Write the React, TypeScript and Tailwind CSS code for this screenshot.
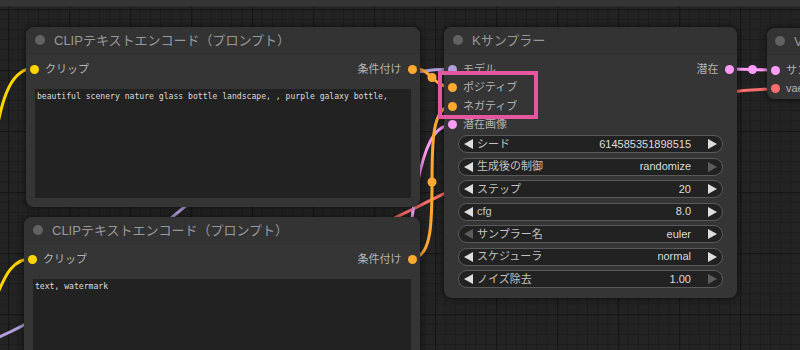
import React from "react";

const SLOT_COLORS = {
  clip: "#ffd500",
  conditioning: "#ffa931",
  model: "#b39ddb",
  latent: "#ff9cf9",
  vae: "#ff6e6e",
};

type WidgetRow = {
  label: string;
  value: string;
  leftOff?: boolean;
  rightOff?: boolean;
};

const KSAMPLER_WIDGETS: WidgetRow[] = [
  { label: "シード", value: "614585351898515" },
  { label: "生成後の制御", value: "randomize", rightOff: true },
  { label: "ステップ", value: "20" },
  { label: "cfg", value: "8.0" },
  { label: "サンプラー名", value: "euler", leftOff: true },
  { label: "スケジューラ", value: "normal" },
  { label: "ノイズ除去", value: "1.00", rightOff: true },
];

const Dot = ({ color }: { color: string }) => (
  <span
    className="w-[9px] h-[9px] rounded-full shrink-0"
    style={{ backgroundColor: color }}
  />
);

const InputSlot = ({ color, label }: { color: string; label: string }) => (
  <div className="flex items-center gap-[6px] pl-[4px] h-[18.5px]">
    <Dot color={color} />
    <span className="text-[11px] text-[#b4b4b4] leading-none whitespace-nowrap">
      {label}
    </span>
  </div>
);

const OutputSlot = ({ color, label }: { color: string; label: string }) => (
  <div className="flex items-center gap-[6px] pr-[3.5px] h-[18.5px]">
    <span className="text-[11px] text-[#b4b4b4] leading-none whitespace-nowrap">
      {label}
    </span>
    <Dot color={color} />
  </div>
);

const NodeTitle = ({ title, pad = "pl-[9px]" }: { title: string; pad?: string }) => (
  <div
    className={`h-[27px] flex items-center gap-[9px] ${pad} bg-[#333] rounded-t-[8px] border-b border-[#2f2f2f]`}
  >
    <span className="w-[10px] h-[10px] rounded-full bg-[#626262] shrink-0" />
    <span className="text-[13px] text-[#999] whitespace-nowrap leading-none">
      {title}
    </span>
  </div>
);

const Arrow = ({ dir, off }: { dir: "left" | "right"; off?: boolean }) => (
  <svg width="9" height="10" viewBox="0 0 9 10" className="shrink-0">
    <polygon
      points={dir === "left" ? "9,0 9,10 0,5" : "0,0 0,10 9,5"}
      fill={off ? "#5c5c5c" : "#dedede"}
    />
  </svg>
);

const Widget = ({ row }: { row: WidgetRow }) => (
  <div className="h-[18px] rounded-full bg-[#222] border border-[#5a5a5a] flex items-center pl-[5px] pr-[5px]">
    <Arrow dir="left" off={row.leftOff} />
    <span className="ml-[4px] text-[11px] text-[#c4c4c4] leading-none whitespace-nowrap">
      {row.label}
    </span>
    <span className="ml-auto text-[11px] text-[#dcdcdc] leading-none whitespace-nowrap">
      {row.value}
    </span>
    <span className="ml-[17px] flex">
      <Arrow dir="right" off={row.rightOff} />
    </span>
  </div>
);

const ClipTextNode = ({
  className,
  prompt,
}: {
  className: string;
  prompt: string;
}) => (
  <div
    className={`absolute rounded-[8px] bg-[#353535] shadow-[0_0_5px_2px_rgba(0,0,0,0.4)] ${className}`}
  >
    <NodeTitle title="CLIPテキストエンコード（プロンプト）" />
    <div className="pt-[6px] flex justify-between">
      <InputSlot color={SLOT_COLORS.clip} label="クリップ" />
      <OutputSlot color={SLOT_COLORS.conditioning} label="条件付け" />
    </div>
    <div className="mt-[10.5px] mx-[9px] h-[109px] bg-[#222] px-[2px] pt-[3px] font-['DejaVu_Sans_Mono','Liberation_Mono',monospace] text-[8.1px] leading-[1.2] text-[#dcdcdc] whitespace-pre">
      {prompt}
    </div>
  </div>
);

const Links = () => (
  <svg
    className="absolute inset-0"
    width="800"
    height="343"
    viewBox="0 7 800 343"
  >
    <defs>
      <pattern
        id="grid"
        x="8"
        y="9"
        width="61"
        height="61"
        patternUnits="userSpaceOnUse"
      >
        <rect width="61" height="61" fill="#232323" />
        <path
          d="M10.17 0V61M20.33 0V61M30.5 0V61M40.67 0V61M50.83 0V61M0 10.17H61M0 20.33H61M0 30.5H61M0 40.67H61M0 50.83H61"
          stroke="#1d1d1d"
          strokeWidth="1"
        />
        <path d="M0.5 0V61M0 0.5H61" stroke="#171717" strokeWidth="1.5" />
      </pattern>
    </defs>
    <rect x="0" y="7" width="800" height="343" fill="url(#grid)" />
    <g fill="none" strokeWidth="3" strokeLinecap="round">
      <path d="M-5 140 C2 95, 12 68, 35 68" stroke={SLOT_COLORS.clip} />
      <path d="M-5 300 C5 275, 12 258, 35 258" stroke={SLOT_COLORS.clip} />
      <path d="M-100 360 C100 360, 250 69, 452 69" stroke={SLOT_COLORS.model} />
      <path d="M0 390 C300 300, 560 89, 776 89" stroke={SLOT_COLORS.vae} />
      <path d="M452 125 C425 125, 412 170, 400 350" stroke={SLOT_COLORS.latent} />
      <path d="M412 68 C432 68, 432 87, 452 87" stroke={SLOT_COLORS.conditioning} />
      <path d="M412 258 C452 258, 412 106, 452 106" stroke={SLOT_COLORS.conditioning} />
      <path d="M729 69 C752 69, 752 70, 776 70" stroke={SLOT_COLORS.latent} />
    </g>
    <circle cx="432" cy="77.5" r="4.5" fill={SLOT_COLORS.conditioning} />
    <circle cx="432" cy="182" r="4.5" fill={SLOT_COLORS.conditioning} />
    <circle cx="752.5" cy="69.5" r="4.5" fill={SLOT_COLORS.latent} />
  </svg>
);

export default function App() {
  return (
    <div className="w-[800px] h-[350px] overflow-hidden flex flex-col bg-[#232323] font-['Liberation_Sans','Noto_Sans_CJK_JP',sans-serif]">
      <div className="h-[7px] shrink-0 bg-[#353535] border-b border-[#2b2b2b]" />
      <div className="relative flex-1">
        <Links />

        <ClipTextNode
          className="left-[26px] top-[20px] w-[394px] h-[180px]"
          prompt="beautiful scenery nature glass bottle landscape, , purple galaxy bottle,"
        />
        <ClipTextNode
          className="left-[24px] top-[210px] w-[396px] h-[180px]"
          prompt="text, watermark"
        />

        {/* KSampler */}
        <div className="absolute left-[444px] top-[20px] w-[293px] rounded-[8px] bg-[#353535] shadow-[0_0_5px_2px_rgba(0,0,0,0.4)]">
          <NodeTitle title="Kサンプラー" />
          <div className="pt-[6px]">
            <div className="flex justify-between">
              <InputSlot color={SLOT_COLORS.model} label="モデル" />
              <OutputSlot color={SLOT_COLORS.latent} label="潜在" />
            </div>
            <InputSlot color={SLOT_COLORS.conditioning} label="ポジティブ" />
            <InputSlot color={SLOT_COLORS.conditioning} label="ネガティブ" />
            <InputSlot color={SLOT_COLORS.latent} label="潜在画像" />
          </div>
          <div className="mt-[1px] px-[14px] pb-[10px] flex flex-col gap-[4.5px]">
            {KSAMPLER_WIDGETS.map((row) => (
              <Widget key={row.label} row={row} />
            ))}
          </div>
        </div>

        {/* VAE decode, cut off by the viewport */}
        <div className="absolute left-[767px] top-[21px] w-[180px] rounded-[8px] bg-[#353535] shadow-[0_0_5px_2px_rgba(0,0,0,0.4)] pb-[1px]">
          <NodeTitle title="VAEデコード" pad="pl-[8px]" />
          <div className="pt-[6px]">
            <InputSlot color={SLOT_COLORS.latent} label="サンプル" />
            <InputSlot color={SLOT_COLORS.vae} label="vae" />
          </div>
        </div>

        {/* highlight box */}
        <div className="absolute left-[438px] top-[64px] w-[100px] h-[48px] border-4 border-[#e4569f]" />
      </div>
    </div>
  );
}
